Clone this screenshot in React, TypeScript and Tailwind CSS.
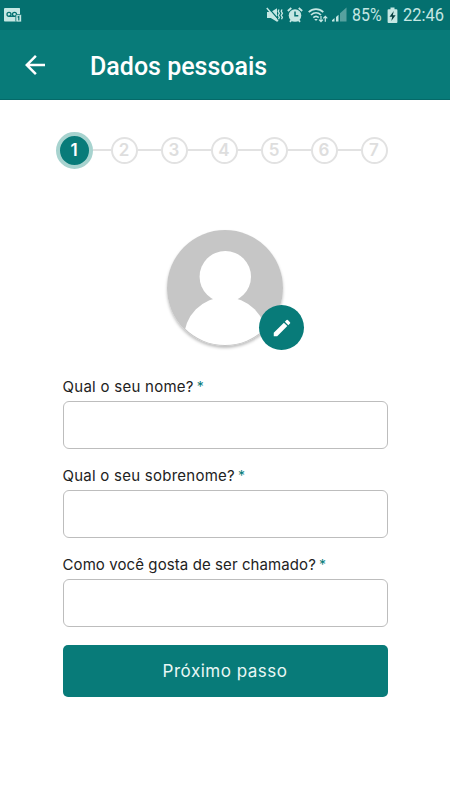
import clsx from 'clsx';

const STEPS = [1, 2, 3, 4, 5, 6, 7];

const FIELDS = [
  { id: 'nome', label: 'Qual o seu nome?', tracking: 'tracking-[0.27px]' },
  { id: 'sobrenome', label: 'Qual o seu sobrenome?', tracking: 'tracking-[0.25px]' },
  { id: 'apelido', label: 'Como você gosta de ser chamado?', tracking: 'tracking-[0.09px]' },
];

function StatusBar() {
  return (
    <div className="flex h-[30px] items-center bg-[#04706f] pl-1 font-[Roboto,sans-serif] text-[#c5e7e3]">
      {/* Voicemail notification */}
      <svg width="18" height="16" viewBox="0 0 18 16">
        <path d="M1 1h14.5a.5.5 0 0 1 .5.5V14.500H.8a.8.8 0 0 1-.8-.8V2a1 1 0 0 1 1-1Z" fill="currentColor" />
        <g fill="none" stroke="#04706f" strokeWidth="1.300">
          <circle cx="5" cy="7.300" r="2" />
          <circle cx="10.500" cy="7.300" r="2" />
          <path d="M5 9.300h5.500" />
        </g>
        <rect x="11.800" y="7.600" width="5.800" height="7.400" rx="1" fill="currentColor" stroke="#04706f" strokeWidth=".8" />
        <path d="M13.600 10.200l1.200-.7v4" fill="none" stroke="#04706f" strokeWidth="1.200" />
      </svg>

      <div className="ml-auto flex items-center pr-[6px]">
        {/* Vibrate / muted */}
        <svg width="18" height="16" viewBox="0 0 18 16" className="mr-[3px]">
          <path d="M1 5h3.800L11 1.200v13.600L4.800 11H1Z" fill="currentColor" />
          <path d="M2 .5 13 13" stroke="#04706f" strokeWidth="1.300" />
          <path d="M.8 1 12 14.200" stroke="currentColor" strokeWidth="1.500" />
          <path d="m13 2.500-.8 1.800 1.200 2-1.200 2 1.200 2-.9 2M16 2.500l-.8 1.800 1.200 2-1.200 2 1.200 2-.9 2" fill="none" stroke="currentColor" strokeWidth="1.300" />
        </svg>
        {/* Alarm */}
        <svg width="16" height="16" viewBox="0 0 16 16" className="mr-[5px]">
          <circle cx="8" cy="8.500" r="6.300" fill="currentColor" />
          <path d="M.8 4 4.300 1M15.200 4l-3.500-3M3 14.800l1.500-1.800M13 14.800 11.500 13" stroke="currentColor" strokeWidth="1.800" />
          <path d="M8 4.500v4.300h3.300" fill="none" stroke="#04706f" strokeWidth="1.500" />
        </svg>
        {/* Wi-Fi */}
        <svg width="20" height="16" viewBox="0 0 20 16" className="mr-[4px]">
          <g fill="none" stroke="currentColor" strokeWidth="1.700">
            <path d="M.7 5.200c4.200-4.100 10.400-4.100 14.600 0M3 8c3-2.900 7-2.900 10 0M5.300 10.700c1.700-1.600 3.700-1.600 5.400 0" />
          </g>
          <path d="m6.200 12 1.800 2 1.800-2Z" fill="currentColor" />
          <path d="M13 9v5.500M11 12.700l2 2 2-2M17.300 14.800V9.500M15.300 11.300l2-2 2 2" fill="none" stroke="currentColor" strokeWidth="1.200" />
        </svg>
        {/* Mobile signal */}
        <svg width="15" height="16" viewBox="0 0 15 16" className="mr-[5px]">
          <path d="M0 14.500v-1.200l2.500-2.300v3.500ZM4 14.500V10l2.500-2.300v6.800Z" fill="currentColor" />
          <path d="M8 14.500V6.300L14.500.500v14Z" fill="#56a19f" />
        </svg>
        <div className="w-[30px] text-[18.5px] leading-[32px]">
          <span className="inline-block origin-left scale-x-[0.86]">85%</span>
        </div>
        <svg width="11" height="17" viewBox="0 0 11 17" className="mx-[5px] shrink-0">
          <path d="M3.500.500h4v1.800h2a.9.9 0 0 1 .9.9V15a.9.9 0 0 1-.9.900h-8A.9.900 0 0 1 .600 15V3.200a.9.9 0 0 1 .9-.9h2Z" fill="currentColor" />
          <path d="M6.800 4 2.500 9.800h2.700L4.300 14l4.300-5.700H5.800Z" fill="#063f40" />
        </svg>
        <div className="w-[41px] text-[18.5px] leading-[32px]">
          <span className="inline-block origin-left scale-x-[0.89]">22:46</span>
        </div>
      </div>
    </div>
  );
}

function Stepper({ current }: { current: number }) {
  return (
    <ol className="flex h-[38px] items-center font-[Inter,sans-serif]">
      {STEPS.map((step) => (
        <li key={step} className="flex items-center">
          {step > 1 && <span className={clsx('h-[2px] bg-[#e2e2e2]', step === 2 ? 'w-[18px]' : 'w-[23px]')} />}
          <span
            className={clsx(
              'flex items-center justify-center rounded-full pt-px font-semibold',
              step === current
                ? 'size-[37px] border-[4.5px] border-[#a7d3cf] bg-[#087b79] text-[17px] text-white'
                : 'size-[27px] border-[2.5px] border-[#e2e2e2] text-[17px] text-[#dedede]',
            )}
          >
            {step}
          </span>
        </li>
      ))}
    </ol>
  );
}

function Avatar() {
  return (
    <div className="relative mx-auto size-[116px] rounded-full shadow-[0_2px_3px_rgba(0,0,0,0.25)]">
      <svg width="116" height="116" viewBox="0 0 116 116">
        <clipPath id="avatar-clip">
          <circle cx="58" cy="58" r="57" />
        </clipPath>
        <circle cx="58" cy="58" r="58" fill="#c6c6c6" />
        <g fill="#fff" clipPath="url(#avatar-clip)">
          <circle cx="58.300" cy="46.700" r="25.700" />
          <ellipse cx="58.300" cy="109" rx="41.500" ry="42" />
        </g>
      </svg>
      <button
        type="button"
        aria-label="Editar foto"
        className="absolute top-[75px] left-[92px] flex size-[45px] items-center justify-center rounded-full bg-[#087b79]"
      >
        <svg width="22" height="22" viewBox="0 0 24 24" fill="#fff">
          <path d="M3 17.250V21h3.750L17.810 9.940l-3.750-3.750L3 17.250ZM20.710 7.040a1 1 0 0 0 0-1.410l-2.340-2.340a1 1 0 0 0-1.410 0l-1.830 1.830 3.750 3.750 1.830-1.830Z" />
        </svg>
      </button>
    </div>
  );
}

export default function App() {
  return (
    <div className="h-[800px] w-[450px] overflow-hidden bg-white">
      <StatusBar />

      <header className="flex h-[70px] items-center border-b border-[#056968] bg-[#087b79] text-white">
        <button type="button" aria-label="Voltar" className="ml-[20px]">
          <svg width="30" height="30" viewBox="0 0 24 24" fill="#fff">
            <path d="M20 11H7.830l5.590-5.590L12 4l-8 8 8 8 1.410-1.410L7.830 13H20v-2Z" />
          </svg>
        </button>
        <h1 className="ml-[40px] pt-[5px] font-[Roboto,sans-serif] text-[25px] leading-9 font-medium">Dados pessoais</h1>
      </header>

      <main className="px-[62.5px] pt-[31px]">
        <div className="-mx-[7px]">
          <Stepper current={1} />
        </div>

        <div className="mt-[61px]">
          <Avatar />
        </div>

        <form className="mt-[29px] font-[Inter,sans-serif]">
          {FIELDS.map(({ id, label, tracking }) => (
            <div key={id} className="mb-[14px] h-[75px]">
              <label htmlFor={id} className={clsx('block h-[26px] text-[15px] leading-[24px] whitespace-nowrap text-[#222]', tracking)}>
                {label}
                <span className="ml-[3px] text-[14px] text-[#087b79]">*</span>
              </label>
              <input id={id} className="block h-[48px] w-full rounded-[6px] border border-[#bdbdbd] bg-white px-3 outline-none" />
            </div>
          ))}
          <button type="button" className="mt-[3px] h-[52px] w-full rounded-[5px] bg-[#087b79] pt-[2px] text-[17px] tracking-[0.5px] text-[#e8f7f5]">
            Próximo passo
          </button>
        </form>
      </main>
    </div>
  );
}
